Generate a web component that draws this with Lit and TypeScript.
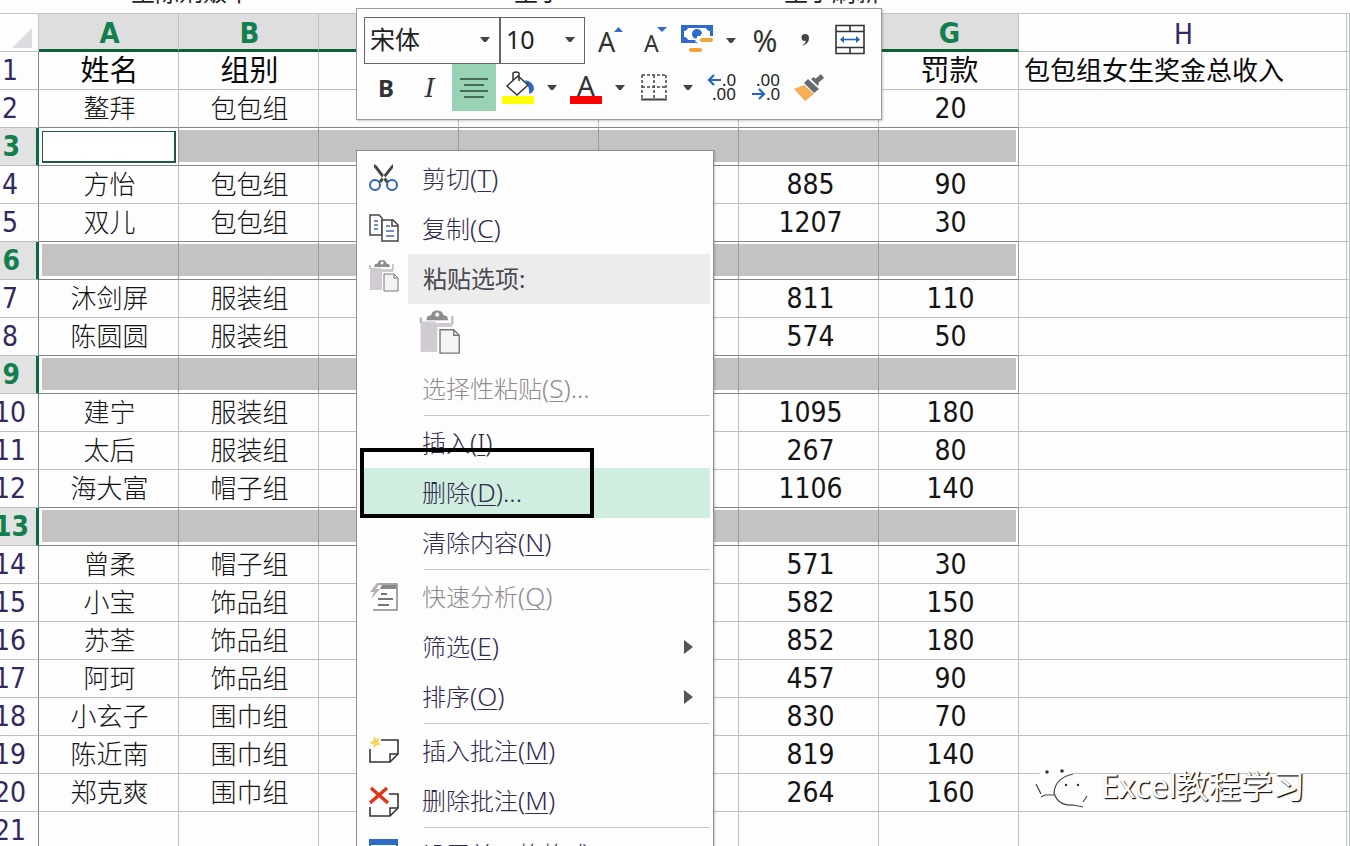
import { LitElement, html, css, svg, nothing } from "lit";
import { customElement } from "lit/decorators.js";

const people: Record<number, string[]> = {
  1: ["姓名", "组别", "", "", "", "", "罚款", "包包组女生奖金总收入"],
  2: ["鳌拜", "包包组", "", "", "", "", "20"],
  4: ["方怡", "包包组", "", "", "", "885", "90"],
  5: ["双儿", "包包组", "", "", "", "1207", "30"],
  7: ["沐剑屏", "服装组", "", "", "", "811", "110"],
  8: ["陈圆圆", "服装组", "", "", "", "574", "50"],
  10: ["建宁", "服装组", "", "", "", "1095", "180"],
  11: ["太后", "服装组", "", "", "", "267", "80"],
  12: ["海大富", "帽子组", "", "", "", "1106", "140"],
  14: ["曾柔", "帽子组", "", "", "", "571", "30"],
  15: ["小宝", "饰品组", "", "", "", "582", "150"],
  16: ["苏荃", "饰品组", "", "", "", "852", "180"],
  17: ["阿珂", "饰品组", "", "", "", "457", "90"],
  18: ["小玄子", "围巾组", "", "", "", "830", "70"],
  19: ["陈近南", "围巾组", "", "", "", "819", "140"],
  20: ["郑克爽", "围巾组", "", "", "", "264", "160"],
};
const selectedRows = [3, 6, 9, 13];
const columns = ["A", "B", "C", "D", "E", "F", "G", "H", "I"];

@customElement("sheet-grid")
export class SheetGrid extends LitElement {
  static styles = css`
    :host { display: block; }
    table {
      table-layout: fixed; width: 100%; border-collapse: separate; border-spacing: 0;
      font-family: "DejaVu Sans Condensed", "Noto Sans CJK SC", sans-serif;
    }
    th, td {
      box-sizing: border-box; height: 38px; padding: 0; overflow: hidden; white-space: nowrap;
      border-right: 1px solid #bcc4c4; border-bottom: 1px solid #bcc0c2; text-align: center;
    }
    .c-head { width: 39px; }
    .c-std { width: 140px; }
    .c-wide { width: 328px; }
    thead th { height: 39px; padding: 4px 0 0 2px; border-top: 1px solid #c4c4c6; color: #2d2a66; font-size: 28px; line-height: 33px; font-weight: 400; }
    thead th.on { background: #dedede; color: #12804e; font-size: 29px; font-weight: 700; border-bottom: 3px solid #0b6135; line-height: 31px; }
    thead th.corner { background: #fdfdfe; padding: 0; }
    .corner svg { display: block; margin: 10px 0 0 11px; }
    tbody th {
      color: #33295c; font-size: 28px; font-weight: 400; line-height: 36px; padding-top: 1px;
      border-right-color: #6f8f82;
    }
    .num { display: flex; justify-content: flex-end; padding-right: 12px; }
    .short .num { padding-right: 20px; }
    tbody th.on { background: #e2e2e2; color: #12804e; font-weight: 700; border-right: 3px solid #0b6b39; }
    tbody th.on .num { padding-right: 7px; }
    tbody th.short.on .num { padding-right: 16px; }
    td { font-size: 26px; line-height: 35px; color: #141414; font-weight: 300; padding: 2px 0 0 2px; }
    td.n { font-size: 28px; font-weight: 400; line-height: 36px; padding-top: 1px; padding-left: 4px; }
    tr.title td { font-size: 29px; font-weight: 400; color: #0a0a0a; }
    tr.title td.wide { font-size: 26px; text-align: left; padding-left: 5px; }
    tr.sel td.in {
      background: #c3c3c3; border-right-color: #9b9b9b; border-bottom-color: #858585;
      box-shadow: inset 0 2px #fff, inset 0 -3px #fff;
    }
    tr.pre td.in { border-bottom-color: #858585; }
    tr.sel td.first { box-shadow: inset 0 2px #fff, inset 0 -3px #fff, inset 3px 0 #fff; }
    tr.sel td.last { box-shadow: inset 0 2px #fff, inset 0 -3px #fff, inset -2px 0 #fff; }
    tr.sel td.active { background: #fff; box-shadow: none; padding: 2px 2px 2px 3px; }
    .cursor { box-sizing: border-box; height: 32px; border: 2px solid #1c5a42; border-width: 1px 2px 2px 1px; }
  `;
  row(r: number) {
    const sel = selectedRows.includes(r);
    const cells = people[r] ?? [];
    const cls = [r === 1 ? "title" : "", sel ? "sel" : "", selectedRows.includes(r + 1) ? "pre" : ""].join(" ");
    return html`<tr class=${cls}>
      <th scope="row" class="${sel ? "on" : ""} ${r < 10 ? "short" : ""}"><span class="num">${r}</span></th>
      ${columns.map((_, i) => {
        const v = cells[i] ?? "";
        const c = [
          i < 7 ? "in" : "", i === 0 ? "first" : "", i === 6 ? "last" : "", i === 7 ? "wide" : "",
          r === 3 && i === 0 ? "active" : "", /^\d+$/.test(v) ? "n" : "",
        ].join(" ");
        return html`<td class=${c}>${r === 3 && i === 0 ? html`<div class="cursor"></div>` : v}</td>`;
      })}
    </tr>`;
  }
  render() {
    return html`<table>
      <colgroup>
        <col class="c-head" />${[1, 2, 3, 4, 5, 6, 7].map(() => html`<col class="c-std" />`)}<col class="c-wide" /><col />
      </colgroup>
      <thead><tr>
        <th class="corner"><svg width="22" height="20"><path d="M21 0V20H1Z" fill="#dcdce0" /></svg></th>
        ${columns.map((c, i) => html`<th scope="col" class=${i < 7 ? "on" : ""}>${i < 8 ? c : nothing}</th>`)}
      </tr></thead>
      <tbody>${Array.from({ length: 21 }, (_, i) => this.row(i + 1))}</tbody>
    </table>`;
  }
}

const caret = html`<svg class="caret" width="10" height="6" viewBox="0 0 10 6"><path d="M0 0H10L6 5H4Z" fill="#444" /></svg>`;

@customElement("mini-toolbar")
export class MiniToolbar extends LitElement {
  static styles = css`
    :host {
      display: block; box-sizing: border-box; width: 526px; height: 112px; padding: 8px 7px;
      background: #fdfdfe; border: 1px solid #9c9c9c; box-shadow: 1px 1px 2px #0003;
      font-family: "Noto Sans", "Noto Sans CJK SC", sans-serif; color: #333;
    }
    .line { display: flex; align-items: center; height: 47px; }
    button { flex: none; border: 0; background: none; padding: 0; margin: 0; font: inherit; color: inherit; display: flex; align-items: center; justify-content: center; height: 47px; }
    button svg { display: block; }
    .pick { flex: none; position: relative; box-sizing: border-box; height: 47px; border: 1px solid #666; display: flex; align-items: center; }
    .font { width: 136px; }
    .size { width: 85px; }
    select { appearance: none; border: 0; background: none; width: 100%; height: 45px; padding: 0 0 4px 5px; color: #222; font: 400 25px "Noto Sans", "Noto Sans CJK SC", sans-serif; }
    .pick .caret { position: absolute; right: 9px; top: 19px; pointer-events: none; }
    .w24 { width: 24px; } .w36 { width: 36px; } .w44 { width: 44px; } .w54 { width: 54px; }
    .b { font-weight: 700; font-size: 24px; }
    .i { font: italic 400 26px "DejaVu Serif", serif; }
    .on { background: #99d3b5; }
    .pct { font-size: 30px; }
    .gap { flex: none; width: 3px; }
  `;
  render() {
    return html`
      <div class="line">
        <label class="pick font"><select aria-label="字体"><option>宋体</option></select>${caret}</label>
        <label class="pick size"><select aria-label="字号"><option>10</option></select>${caret}</label>
        <button class="w54" aria-label="增大字号"><svg width="28" height="30" viewBox="0 0 28 30"><text x="0" y="26" font-size="27" fill="#333">A</text><path d="M16 6L20.500 1L25 6Z" fill="#2e6bc8" /></svg></button>
        <button class="w36" aria-label="减小字号"><svg width="28" height="30" viewBox="0 0 28 30"><text x="1" y="26" font-size="23" fill="#333">A</text><path d="M14 1H24L19 6Z" fill="#2e6bc8" /></svg></button>
        <button class="w44" aria-label="会计数字格式"><svg width="34" height="34" viewBox="0 0 34 34">
          <path d="M1 1H33V19H1Z" fill="#2e6bd0" /><path d="M8 4H26Q27 7 30 7V13Q27 13 26 16H8Q7 13 4 13V7Q7 7 8 4Z" fill="#fff" />
          <circle cx="17" cy="10" r="5" fill="#2e6bd0" /><path d="M18 10H24V18H15Z" fill="#fff" />
          <path d="M16 9L21 10L20 14L16 14Z" fill="#2e6bd0" />
          <rect x="17" y="12" width="17" height="8" fill="#fff" /><rect x="20" y="14" width="13" height="4" rx="2" fill="#f2a33a" /><rect x="9" y="24" width="13" height="4" rx="2" fill="#f2a33a" /></svg></button>
        <button class="w24" aria-label="更多货币">${caret}</button>
        <button class="w44 pct" aria-label="百分比">%</button>
        <button class="w36" aria-label="千位分隔"><svg width="10" height="16" viewBox="0 0 10 16"><path d="M5 1A3.500 3.500 0 1 0 5 8Q6 8 6 7Q6 10 2 13Q9 11 9 5Q9 1 5 1Z" fill="#444" /></svg></button>
        <button class="w54" aria-label="合并后居中"><svg width="30" height="34" viewBox="0 0 30 34" fill="none" stroke="#333" stroke-width="1.600"><path d="M1 1.500H29V29.500H1ZM1 7.500H29M1 23.500H29M15 1V7M15 24V29" /><path d="M6 15.500H24" stroke="#2463b8" /><path d="M9 12L5 15.500L9 19ZM21 12L25 15.500L21 19Z" fill="#2463b8" stroke="none" /></svg></button>
      </div>
      <div class="line">
        <button class="w44 b" aria-label="加粗">B</button><button class="w44 i" aria-label="倾斜">I</button>
        <button class="w44 on" aria-label="居中"><svg width="28" height="22" viewBox="0 0 28 22" stroke="#2d4a3c" stroke-width="1.600"><path d="M0 2H28M4 8H24M0 14H28M4 20H24" /></svg></button>
        <button class="w44" aria-label="填充颜色"><svg width="34" height="36" viewBox="0 0 34 36"><rect x="1" y="26" width="32" height="8" fill="#ffff00" /><path d="M24 10Q33 12 33 19Q32 23 28 24Q29 18 24 10Z" fill="#2e66c6" /><path d="M6 16L17 6L27 15L16 25Z" fill="#fff" stroke="#333" stroke-width="1.500" /><path d="M12 10V3Q15 1 18 3V11" fill="none" stroke="#333" stroke-width="1.500" /></svg></button>
        <button class="w24" aria-label="更多填充颜色">${caret}</button>
        <button class="w44" aria-label="字体颜色"><svg width="34" height="36" viewBox="0 0 34 36"><text x="8" y="26" font-size="28" fill="#333">A</text><rect x="1" y="26" width="32" height="8" fill="#f00" /></svg></button>
        <button class="w24" aria-label="更多字体颜色">${caret}</button>
        <button class="w44" aria-label="边框"><svg width="28" height="30" viewBox="0 0 28 30" fill="none" stroke="#444" stroke-width="1.500"><path d="M2 2H26M2 14H26M2 2V26M14 2V26M26 2V26" stroke-dasharray="3 2" /><path d="M1 26.500H27" stroke-width="2" /></svg></button>
        <button class="w24" aria-label="更多边框">${caret}</button>
        <button class="w44" aria-label="增加小数位"><svg width="30" height="30" viewBox="0 0 30 30" font-size="17" fill="#222"><text x="15" y="13">.0</text><text x="5" y="27">.00</text><path d="M14 7H2M7 2L2 7L7 12" fill="none" stroke="#2463c8" stroke-width="2.200" /></svg></button>
        <button class="w44" aria-label="减少小数位"><svg width="30" height="30" viewBox="0 0 30 30" font-size="17" fill="#222"><text x="5" y="13">.00</text><text x="15" y="27">.0</text><path d="M1 21H13M8 16L13 21L8 26" fill="none" stroke="#2463c8" stroke-width="2.200" /></svg></button>
        <span class="gap"></span>
        <button class="w36" aria-label="格式刷"><svg width="32" height="28" viewBox="0 0 32 28"><path d="M1 15L11 11L21 20L12 27Z" fill="#f4ae55" /><path d="M11 9L15 5L26 15L21 19Z" fill="#666b70" /><path d="M21 6L28 0L31 4L25 9Z" fill="#666b70" /><path d="M18 5L21 3L26 9L25 12Z" fill="#666b70" /></svg></button>
      </div>`;
  }
}

const icons: Record<string, unknown> = {
  cut: svg`<path d="M5 1L8 3L20 19L17 20L5 4ZM24 1L22 3L10 18L12 20L24 5Z" fill="#444"/><g fill="none" stroke="#2e66b5" stroke-width="2"><circle cx="6" cy="22" r="5"/><circle cx="23" cy="22" r="5"/></g>`,
  copy: svg`<g fill="#fdfdfe" stroke="#444" stroke-width="1.500"><path d="M1 2H10L13 5V22H1Z"/><path d="M13 7H24L29 12V28H13Z"/><path d="M23 7V13H29" fill="none"/></g><path d="M5 8H9M5 12H9M5 16H9M17 13H21M17 18H25M17 23H25" stroke="#4468a8" stroke-width="1.500"/>`,
  paste: svg`<path d="M3 6H14V31H3Z" fill="#d0ccd2"/><path d="M3 10H26V13H16V31H3Z" fill="#cfcbd0"/><path d="M3 6V10M26 5V11" stroke="#b9b6ba" stroke-width="1.500"/><path d="M4 3H25V9H4Z" fill="#fdfdfe"/><path d="M7 8L8 5Q11 5 11 3Q12 1 15 1T19 3Q19 5 22 5L23 8Z" fill="#8d8d90"/><circle cx="15" cy="4" r="1.500" fill="#fdfdfe"/><path d="M15 13H27L33 19V33H15Z" fill="#fdfdfe"/><path d="M17 15H27L31 19V32H17Z" fill="#f4f3f6" stroke="#777"/><path d="M27 15V19H31" fill="none" stroke="#777"/>`,
  quick: svg`<path d="M9 3H28V29H4" fill="none" stroke="#888" stroke-width="1.500"/><path d="M13 4H27V8H11Z" fill="#888"/><path d="M12 13H18M9 18H24M9 24H20" stroke="#777" stroke-width="2"/><path d="M8 2L1 11H5L2 18L11 8H7L11 2Z" fill="#b9aeb4"/>`,
  note: svg`<path d="M12 5H29V19L21 27H1V14" fill="none" stroke="#333" stroke-width="1.600"/><path d="M21 27V19H29" fill="none" stroke="#333" stroke-width="1.500"/><path d="M5 1L7 4L11 3L9 7L12 10L8 10L5 13L4 9L0 8L4 6Z" fill="#f7d560"/>`,
  del: svg`<path d="M20 9H29V23L21 31H1V22" fill="none" stroke="#333" stroke-width="1.600"/><path d="M21 31V23H29" fill="none" stroke="#333" stroke-width="1.500"/><path d="M2 3L19 18M18 3L1 18" stroke="#e0361b" stroke-width="3.500"/>`,
  format: svg`<path d="M1 1H28V28H1Z" fill="#fff" stroke="#2e6bc8" stroke-width="2"/><path d="M1 1H28V6H1Z" fill="#2e6bc8"/>`,
};

@customElement("context-menu")
export class ContextMenu extends LitElement {
  static styles = css`
    :host {
      display: block; box-sizing: border-box; width: 358px; padding: 3px 3px 3px 1px; background: #fdfdfe;
      border: 1px solid #8f8f92; box-shadow: 1px 1px 2px #0003;
      font: 300 24px "Noto Sans", "Noto Sans CJK SC", sans-serif; color: #33294d;
    }
    button {
      display: flex; align-items: center; width: 100%; height: 50px; border: 0; padding: 0; background: none;
      font: inherit; color: inherit; text-align: left; white-space: nowrap;
    }
    .icon { flex: none; width: 50px; height: 50px; display: flex; align-items: center; justify-content: center; }
    .icon svg { display: block; }
    button .icon { width: 52px; }
    .label { flex: 1; padding-left: 12px; line-height: 50px; }
    .key { font-size: 26px; line-height: 48px; }
    u { text-underline-offset: 3px; text-decoration-thickness: 1px; }
    button:disabled { color: #908a92; }
    .hot { background: linear-gradient(90deg, #fdfdfe 4px, #cfeee0 4px); }
    .caption { display: flex; align-items: center; height: 50px; font-weight: 400; color: #4a4a52; }
    .caption .label { background: #ececed; padding-left: 15px; }
    .paste { height: 60px; padding: 0 0 4px 60px; }
    .paste svg { display: block; width: 44px; height: 47px; }
    hr { height: 1px; margin: 1px 0 2px 66px; border: 0; background: #c8c8ca; }
    .arrow { flex: none; margin-right: 17px; }
  `;
  item(text: string, key: string, o: { icon?: string; tail?: string; off?: boolean; hot?: boolean; sub?: boolean } = {}) {
    return html`<button class=${o.hot ? "hot" : ""} ?disabled=${o.off}>
      <span class="icon">${o.icon ? html`<svg width="30" height="32" viewBox="0 0 30 32">${icons[o.icon]}</svg>` : nothing}</span>
      <span class="label">${text}<span class="key">(<u>${key}</u>)${o.tail ?? ""}</span></span>
      ${o.sub ? html`<svg class="arrow" width="9" height="14"><path d="M0 0L9 7L0 14Z" fill="#555" /></svg>` : nothing}
    </button>`;
  }
  render() {
    return html`
      ${this.item("剪切", "T", { icon: "cut" })}
      ${this.item("复制", "C", { icon: "copy" })}
      <div class="caption"><span class="icon"><svg width="32" height="40" viewBox="0 0 32 40">${icons.paste}</svg></span><span class="label">粘贴选项:</span></div>
      <button class="paste" aria-label="粘贴" disabled><svg viewBox="1 0 32 34">${icons.paste}</svg></button>
      ${this.item("选择性粘贴", "S", { off: true, tail: "..." })}
      <hr />
      ${this.item("插入", "I")}
      ${this.item("删除", "D", { hot: true, tail: "..." })}
      ${this.item("清除内容", "N")}
      <hr />
      ${this.item("快速分析", "Q", { icon: "quick", off: true })}
      ${this.item("筛选", "E", { sub: true })}
      ${this.item("排序", "O", { sub: true })}
      <hr />
      ${this.item("插入批注", "M", { icon: "note" })}
      ${this.item("删除批注", "M", { icon: "del" })}
      <hr />
      ${this.item("设置单元格格式", "F", { icon: "format", tail: "..." })}`;
  }
}

@customElement("app-root")
export class AppRoot extends LitElement {
  static styles = css`
    :host { display: block; position: relative; height: 100vh; overflow: hidden; background: #fdfdfe; }
    .ribbon {
      height: 13px; overflow: hidden; display: flex; align-items: flex-end;
      font: 400 24px/24px "Noto Sans CJK SC", sans-serif; color: #222;
    }
    .tab { box-sizing: border-box; flex: none; height: 34px; }
    .t1 { width: 514px; padding-left: 131px; } .t2 { width: 270px; }
    mini-toolbar { position: absolute; left: 356px; top: 8px; }
    context-menu { position: absolute; left: 356px; top: 150px; }
    .mark { position: absolute; box-sizing: border-box; left: 360px; top: 448px; width: 234px; height: 70px; border: 4px solid #000; pointer-events: none; }
    .brand {
      position: absolute; left: 1035px; top: 764px; display: flex; align-items: center; gap: 12px;
      font: 400 32px/44px "Noto Sans", "Noto Sans CJK SC", sans-serif; color: #fdfdfe;
      text-shadow: 1px 1px 1px #111, 1px 1px 1px #333;
    }
  `;
  render() {
    return html`
      <div class="ribbon"><span class="tab t1">至陈剂贩本</span><span class="tab t2">至于</span><span class="tab">至于刷新</span></div>
      <sheet-grid></sheet-grid>
      <mini-toolbar></mini-toolbar>
      <context-menu></context-menu>
      <div class="mark"></div>
      <div class="brand">
        <svg width="54" height="44" viewBox="0 0 54 44">
          <path d="M38 9Q33 2 23 2Q8 2 2 13Q0 22 8 28L7 34L14 31L20 32Q40 28 38 9Z" fill="#fdfdfe" />
          <path d="M38 12Q20 13 19 27Q21 42 40 42L48 44L46 39Q53 35 53 27Q50 14 38 12Z" fill="#fdfdfe" />
          <path d="M1 20L6 30M6 33L10 31H19M38 10Q20 14 19 29Q23 42 38 41L48 43M48 38L52 32" fill="none" stroke="#444" stroke-width="1.200" />
          <g fill="#333"><circle cx="12" cy="8" r="1.800" /><circle cx="27" cy="7" r="1.800" /><circle cx="31" cy="21" r="1.200" /><circle cx="43" cy="21" r="1.200" /></g>
        </svg>
        <span>Excel教程学习</span>
      </div>`;
  }
}
